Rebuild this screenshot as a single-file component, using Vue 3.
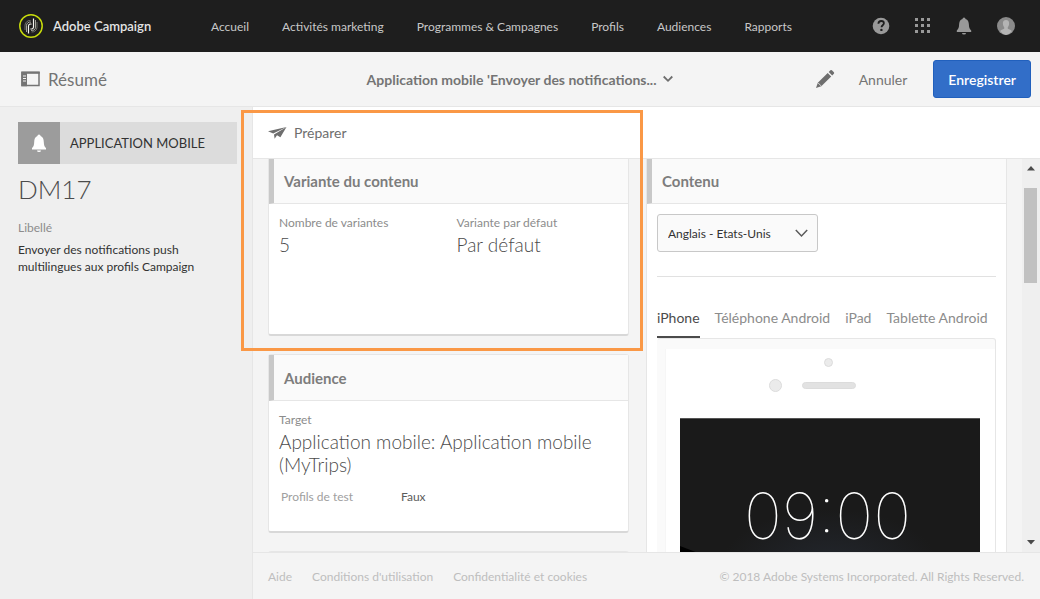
<script setup>
import { ref } from 'vue'

const nav = ['Accueil', 'Activités marketing', 'Programmes & Campagnes', 'Profils', 'Audiences', 'Rapports']
const tabs = ['iPhone', 'Téléphone Android', 'iPad', 'Tablette Android']
const active = ref('iPhone')
const language = ref('Anglais - Etats-Unis')
const dots = [0, 6, 12]
</script>

<template>
  <div class="app">
    <header class="topbar">
      <a class="brand" href="#">
        <svg width="24" height="24" viewBox="0 0 24 24" fill="none" aria-hidden="true">
          <circle cx="12" cy="12" r="11.2" stroke="#c8dc0c" stroke-width="1.5" />
          <g stroke="#cfd0c4" stroke-width="1">
            <path d="M9.500 19.500V12a2 2 0 0 1 3-1.700" stroke="#f4f4ee" stroke-width="1.200" />
            <path d="M7.500 18V11.500a3.500 3.500 0 0 1 4.500-3.300" opacity=".75" />
            <path d="M6 16v-5a5 5 0 0 1 5.500-4.500" opacity=".45" />
            <path d="M14.500 4.500V13a2 2 0 0 1-3 1.700" stroke="#f4f4ee" stroke-width="1.200" />
            <path d="M16.500 6v7a3.500 3.500 0 0 1-4.500 3.500" opacity=".75" />
            <path d="M18 8v5.500a5 5 0 0 1-5.500 4.500" opacity=".45" />
          </g>
        </svg>
        <span>Adobe Campaign</span>
      </a>
      <nav class="nav">
        <a v-for="item in nav" :key="item" href="#">{{ item }}</a>
      </nav>
      <div class="tools">
        <button type="button" aria-label="Aide">
          <svg width="18" height="18" viewBox="0 0 18 18" aria-hidden="true">
            <circle cx="9" cy="9" r="8.300" fill="#999" />
            <path d="M6.400 6.700C6.500 4.900 7.600 4 9.200 4s2.700.9 2.700 2.300c0 1.900-2.400 2-2.400 4" fill="none" stroke="#1e1e1e" stroke-width="1.800" />
            <circle cx="9.400" cy="12.900" r="1.200" fill="#1e1e1e" />
          </svg>
        </button>
        <button type="button" aria-label="Applications">
          <svg width="16" height="16" viewBox="0 0 16 16" fill="#999" aria-hidden="true">
            <template v-for="y in dots" :key="y">
              <rect v-for="x in dots" :key="x" :x="x" :y="y" width="3" height="3" />
            </template>
          </svg>
        </button>
        <button type="button" aria-label="Notifications">
          <svg width="16" height="18" viewBox="0 0 16 18" fill="#999" aria-hidden="true">
            <path d="M8 0.500a1.600 1.600 0 0 1 1.500 1.600C12 2.800 12.800 5 12.900 7.600c.1 3 .6 4.400 2.300 5.900V15H.8v-1.500c1.700-1.500 2.200-2.900 2.300-5.900C3.200 5 4 2.800 6.500 2.100A1.600 1.600 0 0 1 8 .5zM6 16h4a2 1.600 0 0 1-4 0z" />
          </svg>
        </button>
        <button type="button" class="avatar" aria-label="Profil">
          <svg width="18" height="18" viewBox="0 0 18 18" aria-hidden="true">
            <circle cx="9" cy="9" r="9" fill="#8a8a8a" />
            <path d="M9 3c2.300 0 3.300 1.600 3.100 3.800-.1 1.600-.6 2.600-1.300 3.400v1.600c1.500.7 3.300 1 4 2.500A9 9 0 0 1 9 18a9 9 0 0 1-5.800-3.700c.7-1.500 2.500-1.800 4-2.500v-1.600C6.500 9.400 6 8.400 5.900 6.800 5.700 4.600 6.700 3 9 3z" fill="#b4b4b4" />
          </svg>
        </button>
      </div>
    </header>

    <div class="toolbar">
      <button type="button" class="summary">
        <svg width="19" height="16" viewBox="0 0 19 16" aria-hidden="true">
          <path d="M1 1.500h17v13H1z" fill="none" stroke="#747474" stroke-width="1.500" />
          <path d="M.3 .6h18.400v2.200H.3zM.3 1H6v14.200H.3z" fill="#747474" />
          <path d="M2 5h3M2 7.500h3M2 10h3" stroke="#f4f4f4" stroke-width="1.200" />
        </svg>
        <span>Résumé</span>
      </button>
      <button type="button" class="title">
        <span>Application mobile 'Envoyer des notifications...</span>
        <svg width="10" height="8" viewBox="0 0 10 8" fill="none" stroke="#6e6e6e" stroke-width="1.800" aria-hidden="true"><path d="M.7 1.500L5 5.800l4.300-4.300" /></svg>
      </button>
      <div class="actions">
        <button type="button" class="edit" aria-label="Modifier">
          <svg width="20" height="20" viewBox="0 0 20 20" fill="#6e6e6e" aria-hidden="true">
            <path d="M1 19l1.800-5.300L12.700 3.900l3.500 3.500-9.900 9.800zM13.700 2.900l1.700-1.700q.8-.6 1.500 0l2 2q.6.8 0 1.500l-1.700 1.700z" />
            <path d="M3.100 13.900l3 3" stroke="#f4f4f4" stroke-width=".8" />
          </svg>
        </button>
        <button type="button" class="cancel">Annuler</button>
        <button type="button" class="save">Enregistrer</button>
      </div>
    </div>

    <div class="body">
      <aside class="sidebar">
        <div class="kind">
          <span class="kind-icon">
            <svg width="16" height="19" viewBox="0 0 16 18" fill="#fff" aria-hidden="true">
              <path d="M8 0a1.700 1.700 0 0 1 1.600 1.600C12 2.500 12.700 4.800 12.800 7.400c.1 3.200.6 4.700 2.200 6V15H1v-1.600c1.600-1.300 2.100-2.800 2.200-6C3.300 4.800 4 2.500 6.400 1.600A1.700 1.700 0 0 1 8 0zM6 16h4a2 1.600 0 0 1-4 0z" />
            </svg>
          </span>
          <span class="kind-name">APPLICATION MOBILE</span>
        </div>
        <h1>DM17</h1>
        <div class="label">Libellé</div>
        <p>Envoyer des notifications push multilingues aux profils Campaign</p>
      </aside>

      <main class="main">
        <div class="prepare">
          <button type="button">
            <svg width="19" height="14" viewBox="0 0 19 14" fill="#6e6e6e" aria-hidden="true">
              <path d="M0 5.300L18.500 1 5.200 7.600z" />
              <path d="M18.500 1L12.400 11.200 9 9.200 6.600 12.800 6 8.600z" />
            </svg>
            <span>Préparer</span>
          </button>
        </div>
        <div class="viewport">
          <div class="columns">
            <div class="column">
              <section class="card">
                <h2>Variante du contenu</h2>
                <div class="content pair">
                  <div>
                    <div class="label">Nombre de variantes</div>
                    <div class="value">5</div>
                  </div>
                  <div>
                    <div class="label">Variante par défaut</div>
                    <div class="value">Par défaut</div>
                  </div>
                </div>
              </section>
              <section class="card">
                <h2>Audience</h2>
                <div class="content">
                  <div class="label">Target</div>
                  <div class="value">Application mobile: Application mobile (MyTrips)</div>
                  <div class="test"><span class="label">Profils de test</span><span>Faux</span></div>
                </div>
              </section>
              <section class="card"></section>
            </div>
            <section class="card preview">
              <h2>Contenu</h2>
              <div class="content">
                <div class="select">
                  <select v-model="language" aria-label="Langue">
                    <option>Anglais - Etats-Unis</option>
                  </select>
                  <svg width="13" height="9" viewBox="0 0 13 9" fill="none" stroke="#5a5a5a" stroke-width="1.500" aria-hidden="true"><path d="M.8 1l5.700 6 5.700-6" /></svg>
                </div>
                <hr />
                <div class="tabs" role="tablist">
                  <button v-for="t in tabs" :key="t" type="button" role="tab" :aria-selected="t === active" :class="{ on: t === active }" @click="active = t">{{ t }}</button>
                </div>
                <div class="device">
                  <div class="phone">
                    <div class="sensors">
                      <i class="camera"></i>
                      <i class="lens"></i>
                      <i class="speaker"></i>
                    </div>
                    <div class="screen"><time>09:00</time></div>
                  </div>
                </div>
              </div>
            </section>
          </div>
          <div class="scrollbar" aria-hidden="true">
            <svg width="8" height="5" viewBox="0 0 8 5" fill="#4a4a4a"><path d="M4 0l4 4.500H0z" /></svg>
            <div class="track"><div class="thumb"></div></div>
            <svg width="8" height="5" viewBox="0 0 8 5" fill="#4a4a4a"><path d="M0 0h8L4 4.500z" /></svg>
          </div>
        </div>
        <footer class="footer">
          <a href="#">Aide</a>
          <a href="#">Conditions d'utilisation</a>
          <a href="#">Confidentialité et cookies</a>
          <span>© 2018 Adobe Systems Incorporated. All Rights Reserved.</span>
        </footer>
        <div class="highlight"></div>
      </main>
    </div>
  </div>
</template>

<style>
body { margin: 0; }
</style>

<style scoped>
.app {
  display: flex;
  flex-direction: column;
  height: 100vh;
  overflow: hidden;
  font-family: Lato, "Noto Sans", sans-serif;
  font-size: 12px;
  color: #4b4b4b;
  background: #f4f4f4;
}
.app *, .app *::before { box-sizing: border-box; }
button { border: 0; padding: 0; background: none; font: inherit; color: inherit; display: flex; align-items: center; cursor: pointer; }
a { color: inherit; text-decoration: none; }
svg { display: block; flex: none; }

.topbar { display: flex; align-items: center; height: 52px; flex: none; padding: 0 25px 0 19px; background: #1e1e1e; color: #c8c8c8; }
.brand { display: flex; align-items: center; gap: 10px; width: 192px; font-size: 13px; font-weight: 600; color: #e4e4e4; white-space: nowrap; }
.nav { display: flex; gap: 33px; white-space: nowrap; }
.tools { display: flex; align-items: center; gap: 25px; margin-left: auto; }

.toolbar { display: flex; align-items: center; justify-content: space-between; height: 55px; flex: none; padding: 0 9px 0 21px; border-bottom: 1px solid #e6e6e6; color: #747474; }
.summary { flex: 1; gap: 8px; font-size: 17px; }
.title { gap: 7px; margin-right: 12px; font-size: 14px; font-weight: 700; white-space: nowrap; }
.actions { flex: 1; display: flex; align-items: center; justify-content: flex-end; font-size: 14px; }
.edit { margin-right: 24px; }
.cancel { margin-right: 26px; }
.save { height: 38px; padding: 0 14px; border: 1px solid #2160bd; border-radius: 3px; background: #326ec8; color: #fff; font-weight: 600; font-size: 14px; }

.body { display: flex; flex: 1; min-height: 0; }
.sidebar { width: 252px; flex: none; padding: 15px 15px 0 18px; background: #efefef; line-height: 17px; }
.kind { display: flex; align-items: center; height: 42px; background: #dcdcdc; color: #323232; font-size: 13px; }
.kind-icon { display: grid; place-items: center; width: 42px; height: 42px; background: #9c9c9c; }
.kind-name { padding-left: 10px; }
h1 { margin: 8px 0 13px; font-size: 26px; line-height: 34px; font-weight: 300; color: #4b4b4b; }
.label { color: #8c8c8c; line-height: 18px; }
.sidebar p { margin: 4px 0 0; max-width: 200px; color: #323232; }

.main { position: relative; flex: 1; min-width: 0; display: flex; flex-direction: column; border-left: 1px solid #e6e6e6; }
.prepare { display: flex; height: 52px; flex: none; padding-left: 15px; background: #fff; border-bottom: 1px solid #e6e6e6; font-size: 14px; color: #6e6e6e; }
.prepare button { gap: 7px; }
.viewport { display: flex; flex: 1; min-height: 0; overflow: hidden; }
.columns { flex: 1; min-width: 0; display: grid; grid-template-columns: minmax(0, 1fr) minmax(0, 1fr); gap: 17px; align-items: start; margin-top: -2px; padding: 0 15px; }
.column { display: grid; gap: 18px; }
.card { min-height: 179px; background: #fff; border: 1px solid #e6e6e6; border-bottom: 2px solid #d8d8d8; border-radius: 3px; }
h2 { margin: 0; height: 46px; padding: 2px 10px 0; line-height: 42px; font-size: 15px; font-weight: 700; color: #7d7d7d; background: #fafafa; border-bottom: 1px solid #e6e6e6; border-left: 5px solid #c8c8c8; }
.content { padding: 10px; }
.pair { display: grid; grid-template-columns: 1fr 1fr; gap: 16px; }
.value { font-size: 19px; line-height: 23px; padding-top: 1px; font-weight: 300; color: #4b4b4b; }
.test { display: flex; align-items: center; padding: 12px 2px 0; line-height: 18px; color: #5c5c5c; }
.test .label { width: 120px; color: #a0a0a0; }

.select { position: relative; width: 161px; }
.select select { appearance: none; width: 100%; height: 38px; padding: 0 30px 0 10px; border: 1px solid #c8c8c8; border-radius: 3px; background: #fafafa; font: inherit; color: #323232; }
.select svg { position: absolute; right: 10px; top: 15px; pointer-events: none; }
hr { margin: 24px 0 26px; border: 0; border-top: 1px solid #e1e1e1; }
.tabs { display: flex; gap: 15px; font-size: 14px; color: #8c8c8c; white-space: nowrap; }
.tabs button { height: 35px; padding-bottom: 5px; border-bottom: 2px solid transparent; }
.tabs .on { color: #4b4b4b; border-color: #4b4b4b; }
.device { padding: 10px 0 0 7px; border: 1px solid #e6e6e6; border-left-color: #fafafa; border-radius: 3px; background: #fafafa; }
.phone { padding: 0 15px 0 14px; background: #fff; border-left: 1px solid #f6f6f6; }
.sensors { position: relative; height: 69px; }
.sensors i { position: absolute; border: 1px solid #dcdcdc; background: #ebebeb; }
.camera { width: 9px; height: 9px; left: calc(50% - 6px); top: 9px; border-radius: 50%; }
.lens { width: 13px; height: 13px; left: calc(50% - 61px); top: 30px; border-radius: 50%; }
.sensors .speaker { width: 54px; height: 7px; left: calc(50% - 28px); top: 33px; border-radius: 4px; background: #e2e2e2; }
.screen { position: relative; height: 240px; padding-top: 65px; text-align: center; color: #fff; border-top: 1px solid #555; background: radial-gradient(ellipse 110px 60px at 50% 150px, #23272e, #1a1a1a); }
.screen::before { content: ""; position: absolute; left: 0; top: 127px; width: 100%; height: 100px; background: #000; clip-path: polygon(0 0, 26% 30%, 0 60%); }
time { position: relative; display: block; margin-right: 5px; font-family: Inter, Lato, sans-serif; font-weight: 100; font-size: 64px; line-height: 64px; }

.scrollbar { display: flex; flex-direction: column; align-items: center; justify-content: space-between; width: 18px; padding: 7px 2px 7px 1px; background: #efefef; }
.track { flex: 1; width: 13px; margin: 17px 0; }
.thumb { height: 95px; background: #c1c1c1; }
.footer { display: flex; align-items: center; gap: 20px; height: 47px; flex: none; padding: 0 16px 0 15px; border-top: 1px solid #e6e6e6; color: #bebebe; white-space: nowrap; }
.footer span { margin-left: auto; }
.highlight { position: absolute; left: -12px; top: 3px; width: 402px; height: 241px; border: 3px solid #fa9846; pointer-events: none; }
</style>
